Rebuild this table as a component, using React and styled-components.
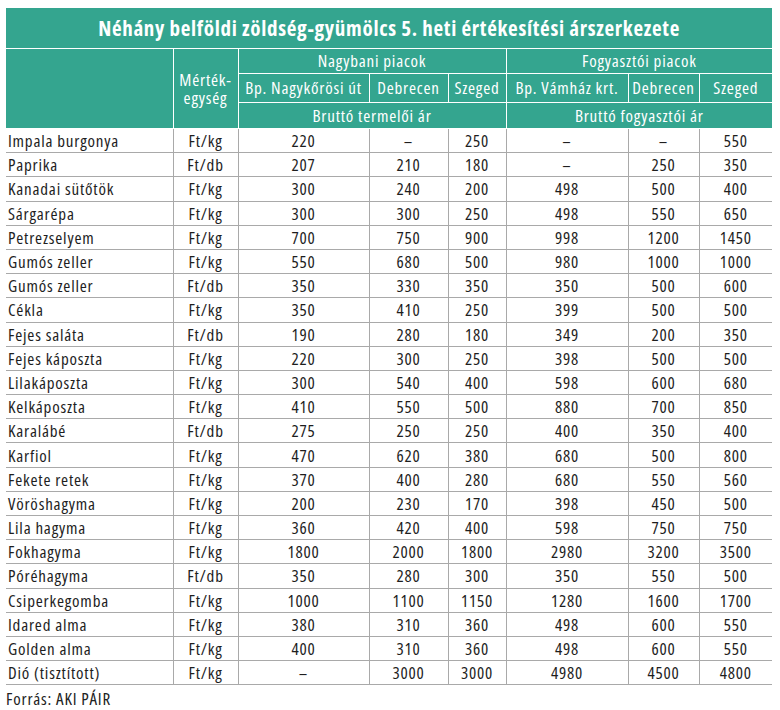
import React from 'react';
import styled, { createGlobalStyle } from 'styled-components';

const TEAL = '#34a58f';
const GRID = '#a9a9a9';

const widths = [167, 65, 131, 79, 58, 122, 71, 73];

const rows = [
  ['Impala burgonya', 'Ft/kg', '220', '–', '250', '–', '–', '550'],
  ['Paprika', 'Ft/db', '207', '210', '180', '–', '250', '350'],
  ['Kanadai sütőtök', 'Ft/kg', '300', '240', '200', '498', '500', '400'],
  ['Sárgarépa', 'Ft/kg', '300', '300', '250', '498', '550', '650'],
  ['Petrezselyem', 'Ft/kg', '700', '750', '900', '998', '1200', '1450'],
  ['Gumós zeller', 'Ft/kg', '550', '680', '500', '980', '1000', '1000'],
  ['Gumós zeller', 'Ft/db', '350', '330', '350', '350', '500', '600'],
  ['Cékla', 'Ft/kg', '350', '410', '250', '399', '500', '500'],
  ['Fejes saláta', 'Ft/db', '190', '280', '180', '349', '200', '350'],
  ['Fejes káposzta', 'Ft/kg', '220', '300', '250', '398', '500', '500'],
  ['Lilakáposzta', 'Ft/kg', '300', '540', '400', '598', '600', '680'],
  ['Kelkáposzta', 'Ft/kg', '410', '550', '500', '880', '700', '850'],
  ['Karalábé', 'Ft/db', '275', '250', '250', '400', '350', '400'],
  ['Karfiol', 'Ft/kg', '470', '620', '380', '680', '500', '800'],
  ['Fekete retek', 'Ft/kg', '370', '400', '280', '680', '550', '560'],
  ['Vöröshagyma', 'Ft/kg', '200', '230', '170', '398', '450', '500'],
  ['Lila hagyma', 'Ft/kg', '360', '420', '400', '598', '750', '750'],
  ['Fokhagyma', 'Ft/kg', '1800', '2000', '1800', '2980', '3200', '3500'],
  ['Póréhagyma', 'Ft/db', '350', '280', '300', '350', '550', '500'],
  ['Csiperkegomba', 'Ft/kg', '1000', '1100', '1150', '1280', '1600', '1700'],
  ['Idared alma', 'Ft/kg', '380', '310', '360', '498', '600', '550'],
  ['Golden alma', 'Ft/kg', '400', '310', '360', '498', '600', '550'],
  ['Dió (tisztított)', 'Ft/kg', '–', '3000', '3000', '4980', '4500', '4800'],
];

const GlobalStyle = createGlobalStyle`
  body {
    margin: 0;
    background: #ffffff;
    font-family: 'Open Sans', 'Liberation Sans', sans-serif;
    font-stretch: 75%;
    color: #1e1e1e;
  }
`;

const Page = styled.div`
  padding: 8px 8px 0 6px;
`;

const Table = styled.table`
  width: 766px;
  border-collapse: collapse;
  table-layout: fixed;
  font-size: 17px;
  letter-spacing: 0.8px;
`;

const TitleCell = styled.th`
  height: 40px;
  padding: 0;
  background: ${TEAL};
  color: #ffffff;
  font-size: 21px;
  font-weight: 700;
  letter-spacing: 0.7px;
  text-align: center;
  border-bottom: 1px solid #ffffff;
`;

const HeadCell = styled.th`
  height: ${({ $h }) => $h}px;
  padding: 0;
  background: ${TEAL};
  color: #ffffff;
  font-weight: 400;
  line-height: 18px;
  text-align: center;
  white-space: nowrap;
  border: 1px solid #ffffff;
  border-top: 0;
  &:first-child {
    border-left: 0;
  }
  &:last-child {
    border-right: 0;
  }
`;

const Row = styled.tr`
  height: 24.2px;
`;

const Cell = styled.td`
  padding: 0 2px;
  text-align: ${({ $left }) => ($left ? 'left' : 'center')};
  border-bottom: 1px solid ${GRID};
  border-left: 1px solid ${GRID};
  white-space: nowrap;
  &:first-child {
    border-left: 0;
  }
`;

const Source = styled.div`
  margin-top: 2px;
  font-size: 17px;
  letter-spacing: 0.8px;
  color: #222222;
`;

export default function App() {
  return (
    <Page>
      <GlobalStyle />
      <Table>
        <colgroup>
          {widths.map((w, i) => (
            <col key={i} style={{ width: w }} />
          ))}
        </colgroup>
        <thead>
          <tr>
            <TitleCell colSpan={8}>
              Néhány belföldi zöldség-gyümölcs 5. heti értékesítési árszerkezete
            </TitleCell>
          </tr>
          <tr>
            <HeadCell $h={24} rowSpan={3} />
            <HeadCell $h={24} rowSpan={3}>
              Mérték-
              <br />
              egység
            </HeadCell>
            <HeadCell $h={24} colSpan={3}>Nagybani piacok</HeadCell>
            <HeadCell $h={24} colSpan={3}>Fogyasztói piacok</HeadCell>
          </tr>
          <tr>
            <HeadCell $h={28}>Bp. Nagykőrösi út</HeadCell>
            <HeadCell $h={28}>Debrecen</HeadCell>
            <HeadCell $h={28}>Szeged</HeadCell>
            <HeadCell $h={28}>Bp. Vámház krt.</HeadCell>
            <HeadCell $h={28}>Debrecen</HeadCell>
            <HeadCell $h={28}>Szeged</HeadCell>
          </tr>
          <tr>
            <HeadCell $h={25} colSpan={3}>Bruttó termelői ár</HeadCell>
            <HeadCell $h={25} colSpan={3}>Bruttó fogyasztói ár</HeadCell>
          </tr>
        </thead>
        <tbody>
          {rows.map((r, i) => (
            <Row key={i}>
              {r.map((v, j) => (
                <Cell key={j} $left={j === 0}>
                  {v}
                </Cell>
              ))}
            </Row>
          ))}
        </tbody>
      </Table>
      <Source>Forrás: AKI PÁIR</Source>
    </Page>
  );
}
